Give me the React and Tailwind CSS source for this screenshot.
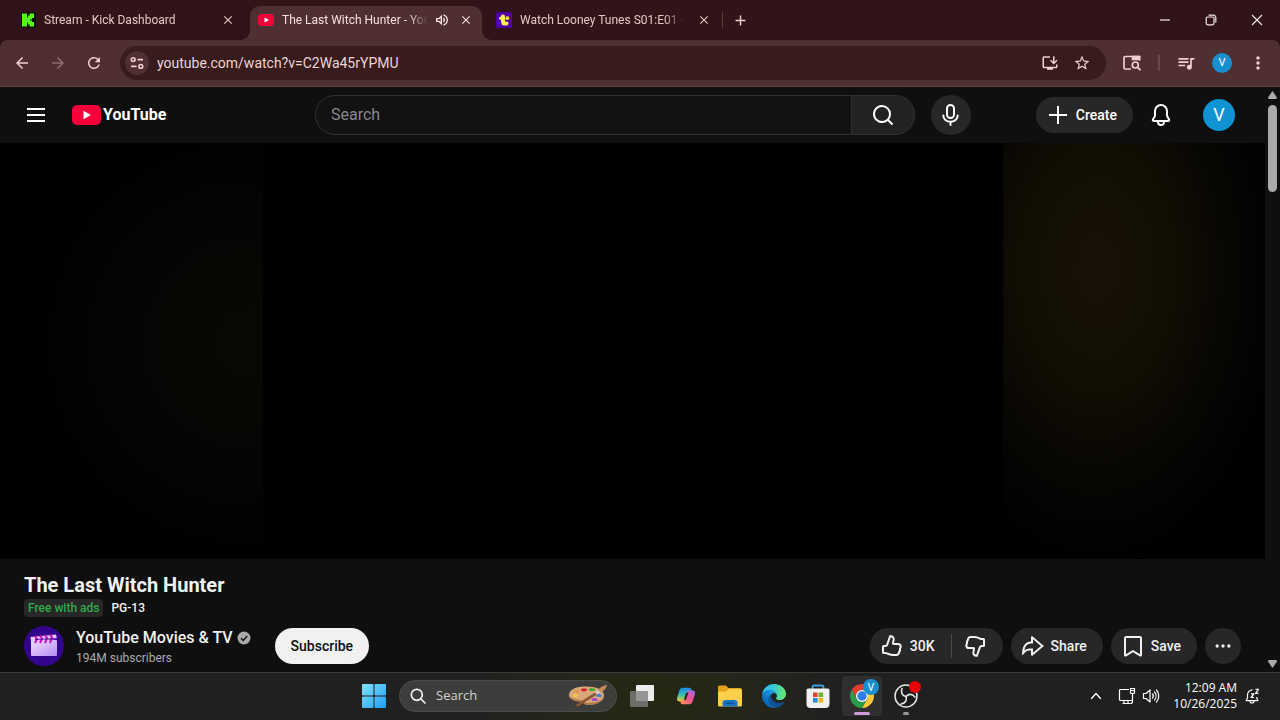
import React from "react";
import clsx from "clsx";
import {
    MdAdd,
    MdArrowBack,
    MdArrowForward,
    MdClose,
    MdInstallDesktop,
    MdMoreVert,
    MdOutlineVolumeUp,
    MdQueueMusic,
    MdRefresh,
    MdStarBorder,
} from "react-icons/md";

/* ---------- YouTube icons ---------- */

const ytPaths = {
    like: "M9.221 1.795a1 1 0 011.109-.656l1.04.173a4 4 0 013.252 4.784L14 9h4.061a3.664 3.664 0 013.576 2.868A3.68 3.68 0 0121 14.85l.02.087A3.815 3.815 0 0120 18.5v.043l-.01.227a2.82 2.82 0 01-.135.663l-.106.282A3.754 3.754 0 0116.295 22h-3.606l-.392-.007a12.002 12.002 0 01-5.223-1.388l-.343-.189-.27-.154a2.005 2.005 0 00-.863-.26l-.13-.004H3.5a1.5 1.5 0 01-1.5-1.5V12.5A1.5 1.5 0 013.5 11h1.79l.157-.013a1 1 0 00.724-.512l.063-.145 2.987-8.535Zm-1.1 9.196A3 3 0 015.29 13H4v4.998h1.468a4 4 0 011.986.528l.27.155.285.157A10 10 0 0012.69 20h3.606c.754 0 1.424-.483 1.663-1.2l.03-.126a.819.819 0 00.012-.131v-.872l.587-.586c.388-.388.577-.927.523-1.465l-.038-.23-.02-.087-.21-.9.55-.744A1.663 1.663 0 0018.061 11H14a2.002 2.002 0 01-1.956-2.418l.623-2.904a2 2 0 00-1.626-2.392l-.21-.035-2.71 7.741Z",
    share: "M10 3.158V7.51c-5.428.223-8.27 3.75-8.875 11.199-.04.487-.07.975-.09 1.464l-.014.395c-.014.473.578.684.88.32.302-.368.61-.73.925-1.086l.244-.273c1.79-1.967 3-2.677 4.93-2.917a18.011 18.011 0 012-.112v4.346a1 1 0 001.646.763l9.805-8.297 1.55-1.31-1.55-1.31-9.805-8.297A1 1 0 0010 3.158Zm2 6.27v.002-4.116l7.904 6.688L12 18.689v-4.212l-2.023.024c-1.935.022-3.587.17-5.197 1.024a9 9 0 00-1.348.893c.355-1.947.916-3.39 1.63-4.425 1.062-1.541 2.607-2.385 5.02-2.485L12 9.428Z",
    save: "M19 2H5a2 2 0 00-2 2v16.887c0 1.266 1.382 2.048 2.469 1.399L12 18.366l6.531 3.919c1.087.652 2.469-.131 2.469-1.397V4a2 2 0 00-2-2ZM5 20.233V4h14v16.233l-6.485-3.89-.515-.309-.515.309L5 20.233Z",
    bell: "M16 19a4 4 0 11-8 0H4.765C3.21 19 2.25 17.304 3.05 15.97l1.806-3.01A1 1 0 005 12.446V8a7 7 0 0114 0v4.446c0 .181.05.36.142.515l1.807 3.01c.8 1.333-.161 3.029-1.716 3.029H16ZM12 3a5 5 0 00-5 5v4.446a3 3 0 01-.428 1.543L4.765 17h14.468l-1.805-3.01A3 3 0 0117 12.445V8a5 5 0 00-5-5Zm-2 16a2 2 0 104 0h-4Z",
    search: "M11 2a9 9 0 105.641 16.01.966.966 0 00.152.197l3.5 3.5a1 1 0 101.414-1.414l-3.5-3.5a1 1 0 00-.197-.153A8.96 8.96 0 0020 11a9 9 0 00-9-9Zm0 2a7 7 0 110 14 7 7 0 010-14Z",
    menu: "M3 5h18v2H3zM3 11h18v2H3zM3 17h18v2H3z",
    plus: "M11 3h2v8h8v2h-8v8h-2v-8H3v-2h8z",
    more: "M5 10a2 2 0 100 4 2 2 0 000-4ZM12 10a2 2 0 100 4 2 2 0 000-4ZM19 10a2 2 0 100 4 2 2 0 000-4Z",
};

function YtIcon({ name, className }) {
    return (
        <svg viewBox="0 0 24 24" className={clsx("size-6 shrink-0 fill-current", className)} aria-hidden="true">
            <path d={ytPaths[name]} />
        </svg>
    );
}

function MicIcon() {
    return (
        <svg viewBox="0 0 24 24" className="size-6" fill="none" stroke="currentColor" strokeWidth="2" strokeLinecap="round">
            <rect x="8" y="2" width="7" height="13" rx="3.5" />
            <path d="M4.3 12.5a7.2 6.3 0 0 0 14.4 0M11.5 19v3" />
        </svg>
    );
}

/* ---------- Browser icons ---------- */

function KickFavicon() {
    return (
        <svg viewBox="0 0 16 16" className="size-4 shrink-0">
            <rect x="1" y="0.5" width="15" height="15" fill="#0b0f0a" />
            <g fill="#53fc18">
                <rect x="2" y="1.500" width="5" height="13" />
                <rect x="6" y="5.500" width="4" height="5" />
                <rect x="8" y="3.500" width="4" height="4" />
                <rect x="8" y="8.500" width="4" height="4" />
                <rect x="9.500" y="1.500" width="4.500" height="4.500" />
                <rect x="9.500" y="10" width="4.500" height="4.500" />
            </g>
        </svg>
    );
}

function YoutubeFavicon() {
    return (
        <svg viewBox="0 0 16 16" className="size-4 shrink-0">
            <rect x="0" y="2" width="16" height="12" rx="3.5" fill="#f5003a" />
            <path d="M6.5 5.4v5.2L11 8z" fill="#fff" />
        </svg>
    );
}

function TubiFavicon() {
    return (
        <svg viewBox="0 0 16 16" className="size-4 shrink-0">
            <rect width="16" height="16" rx="1.500" fill="#5200a8" />
            <g fill="#fff04a">
                <rect x="5" y="2.500" width="4" height="9" rx="1.800" />
                <rect x="3" y="4.500" width="6" height="3.600" rx="1.800" />
                <circle cx="11.300" cy="6.200" r="1.900" />
                <rect x="5.500" y="9.500" width="7" height="4" rx="2" />
            </g>
        </svg>
    );
}

function SiteInfoIcon() {
    return (
        <svg viewBox="0 0 16 16" className="size-4" fill="none" stroke="currentColor" strokeWidth="1.6">
            <circle cx="4.2" cy="4.6" r="1.9" />
            <path d="M8.5 4.6H14M2 11.4h5.5" />
            <circle cx="11.8" cy="11.4" r="1.9" />
        </svg>
    );
}

function SidePanelSearchIcon() {
    return (
        <svg viewBox="0 0 20 20" className="size-5" fill="none" stroke="currentColor" strokeWidth="1.7">
            <path d="M9 16H3.2A1.2 1.2 0 0 1 2 14.8V4.7a1.2 1.2 0 0 1 1.2-1.2H17.5v4" />
            <path d="M10.500 3.500H17.500v2.800H10.500z" fill="currentColor" />
            <circle cx="13.300" cy="12" r="3" />
            <path d="M15.500 14.200l3 3" />
        </svg>
    );
}

/* ---------- Taskbar icons ---------- */

function WindowsLogo() {
    return (
        <svg viewBox="0 0 24 24" className="size-6">
            <defs>
                <linearGradient id="win" x1="0" y1="0" x2="24" y2="24" gradientUnits="userSpaceOnUse">
                    <stop stopColor="#7fe3fb" />
                    <stop offset="1" stopColor="#1f9cf0" />
                </linearGradient>
            </defs>
            <g fill="url(#win)">
                <rect width="11.500" height="11.500" rx="1" />
                <rect x="12.500" width="11.500" height="11.500" rx="1" />
                <rect y="12.500" width="11.500" height="11.500" rx="1" />
                <rect x="12.500" y="12.500" width="11.500" height="11.500" rx="1" />
            </g>
        </svg>
    );
}

function PaletteArt() {
    return (
        <svg viewBox="0 0 40 22" className="h-[22px] w-10 shrink-0">
            <path d="M1 10C1 4 9 1.500 18 1.500c10 0 18 3 18 9C36 17 27 20 20 20c-4 0-4-3-7-3.500C8 16 1 15 1 10Z" fill="#d9a878" />
            <path d="M1 10c0 5 7 6.500 12 7 3 .500 3 3 7 3 7 0 16-3 16-9.500 0 4.500-8 7.500-16 7.500-4 0-4-2.500-7-3C8 14.500 1 13 1 10Z" fill="#b07a4c" />
            <ellipse cx="16" cy="4.800" rx="3" ry="1.600" fill="#d8232a" />
            <ellipse cx="24" cy="4.500" rx="3" ry="1.600" fill="#43a832" />
            <ellipse cx="8.500" cy="6.500" rx="2.600" ry="1.500" fill="#f2913d" />
            <ellipse cx="7.500" cy="10.500" rx="2.600" ry="1.500" fill="#f6c945" />
            <ellipse cx="31" cy="10.500" rx="2.800" ry="1.500" fill="#2f7fd8" />
            <ellipse cx="26.500" cy="14.500" rx="3" ry="1.600" fill="#a83fd0" />
            <path d="M7 20.500 27 7.500l2 2L10 21.500z" fill="#8a5534" />
            <path d="m27 7.500 3-2.500 2.500 2-3.500 2.500z" fill="#c9ced6" />
            <path d="M30 5c2-3 6-4.500 9-5-.500 3-3 6-6.500 7z" fill="#c98a55" />
        </svg>
    );
}

function TaskViewIcon() {
    return (
        <svg viewBox="0 0 26 24" className="h-6 w-[26px]">
            <rect x="7" y="1" width="18" height="16" rx="1" fill="#ececec" />
            <rect x="1" y="7" width="18" height="16" rx="1" fill="#808080" fillOpacity=".8" />
        </svg>
    );
}

function CopilotIcon() {
    return (
        <svg viewBox="0 0 24 24" className="size-[22px]">
            <defs>
                <linearGradient id="cpA" x1="0" y1="0" x2="0" y2="1">
                    <stop stopColor="#1f86e8" />
                    <stop offset=".5" stopColor="#2fc0b4" />
                    <stop offset="1" stopColor="#f6c92c" />
                </linearGradient>
                <linearGradient id="cpB" x1="1" y1="0" x2="0" y2="1">
                    <stop stopColor="#9b6cf0" />
                    <stop offset=".5" stopColor="#f0538f" />
                    <stop offset="1" stopColor="#ff9a4a" />
                </linearGradient>
            </defs>
            <path
                d="M8.500 3h7c1.500 0 2.200 1 2.600 2.500L18.700 7h-2c-1.500 0-2.300.8-2.700 2.200l-1.600 5.600c-.6 2-1.400 3.200-3.200 3.200H4.600C2.500 18 1.700 16 2.300 14l2.500-8C5.400 4 6.600 3 8.500 3Z"
                fill="url(#cpA)"
            />
            <path
                d="M15.500 21h-7c-1.500 0-2.200-1-2.600-2.500L5.400 17h2.400c1.500 0 2.300-.8 2.700-2.200l1.600-5.600C12.700 7.200 13.500 6 15.300 6h4.100c2.100 0 2.900 2 2.300 4l-2.500 8c-.6 2-1.800 3-3.700 3Z"
                fill="url(#cpB)"
            />
            <path d="m14.600 8.500-2.600 7.500h-2.400l2.600-7.500z" fill="#25271a" />
        </svg>
    );
}

function ExplorerIcon() {
    return (
        <svg viewBox="0 0 26 24" className="h-6 w-[26px]">
            <path d="M1 3a1.500 1.500 0 0 1 1.500-1.500H9L11.500 4H23a2 2 0 0 1 2 2v4H1z" fill="#e3a21a" />
            <path d="M1 7.500 9 7.500 11.500 5H23a2 2 0 0 1 2 2v14a1.500 1.500 0 0 1-1.500 1.500h-21A1.500 1.500 0 0 1 1 21z" fill="#fcd04b" />
            <path d="M5.500 22.500V19a3 3 0 0 1 3-3h9a3 3 0 0 1 3 3v3.500z" fill="#1c75c4" />
            <rect x="8.500" y="18.500" width="9" height="1.500" rx=".7" fill="#0d4f92" />
        </svg>
    );
}

function EdgeIcon() {
    return (
        <svg viewBox="0 0 256 256" className="size-6">
            <defs>
                <linearGradient id="edA" x1="58" y1="177" x2="231" y2="177" gradientUnits="userSpaceOnUse">
                    <stop stopColor="#0c59a4" />
                    <stop offset="1" stopColor="#114a8b" />
                </linearGradient>
                <linearGradient id="edB" x1="152" y1="90" x2="40" y2="220" gradientUnits="userSpaceOnUse">
                    <stop stopColor="#1b9de2" />
                    <stop offset=".5" stopColor="#1480d0" />
                    <stop offset="1" stopColor="#0a63b0" />
                </linearGradient>
                <linearGradient id="edC" x1="10" y1="70" x2="250" y2="110" gradientUnits="userSpaceOnUse">
                    <stop stopColor="#35c1f1" />
                    <stop offset=".4" stopColor="#34c6d8" />
                    <stop offset="1" stopColor="#66eb6e" />
                </linearGradient>
            </defs>
            <path
                d="M231 190.5c-3.4 1.8-6.9 3.4-10.5 4.7a101.5 101.5 0 0 1-35.9 6.4c-47.3 0-88.5-32.5-88.5-74.3 0-11.4 6.4-21.9 16.4-27.3-42.8 1.8-53.8 46.4-53.8 72.5 0 74 68.1 81.4 82.8 81.4 7.9 0 19.8-2.3 27-4.6l1.3-.4a128.3 128.3 0 0 0 66.6-52.8 4 4 0 0 0-5.4-5.6z"
                fill="url(#edA)"
            />
            <path
                d="M105.7 241.4a79.2 79.2 0 0 1-22.7-21.3 80.7 80.7 0 0 1 29.5-120c3.2-1.5 8.5-4.2 15.6-4a32.4 32.4 0 0 1 25.7 13 31.9 31.9 0 0 1 6.3 18.7c0-.2 24.5-79.6-80-79.6-43.9 0-80 41.6-80 78.2a130.2 130.2 0 0 0 12.1 56 128 128 0 0 0 156.4 67 75.5 75.5 0 0 1-62.8-8z"
                fill="url(#edB)"
            />
            <path
                d="M152.3 148.9c-.9 1-3.4 2.5-3.4 5.6 0 2.6 1.7 5.2 4.8 7.3 14.3 10 41.4 8.6 41.5 8.6a59.6 59.6 0 0 0 30.3-8.3 61.4 61.4 0 0 0 30.4-52.9c.3-22.4-8-37.3-11.3-43.9C223.5 23.9 177.7 0 128 0A128 128 0 0 0 0 126.2c.5-36.5 36.8-66 80-66 3.5 0 23.5.3 42 10a72.6 72.6 0 0 1 30.9 29.3c6.1 10.6 7.2 24.1 7.2 29.5s-2.7 13.3-7.8 19.9z"
                fill="url(#edC)"
            />
        </svg>
    );
}

function StoreIcon() {
    return (
        <svg viewBox="0 0 26 26" className="size-[26px]">
            <path d="M7.500 7V4A1.500 1.500 0 0 1 9 2.500h8A1.500 1.500 0 0 1 18.500 4V7" fill="none" stroke="#3b9fe0" strokeWidth="1.800" />
            <path d="M1.500 7A1.500 1.500 0 0 1 3 5.500h20A1.500 1.500 0 0 1 24.500 7V21a4 4 0 0 1-4 4h-15a4 4 0 0 1-4-4z" fill="#f1f1f1" />
            <rect x="8" y="9.500" width="4.600" height="4.600" fill="#e8452c" />
            <rect x="13.500" y="9.500" width="4.600" height="4.600" fill="#6fb52c" />
            <rect x="8" y="15" width="4.600" height="4.600" fill="#1f8fe0" />
            <rect x="13.500" y="15" width="4.600" height="4.600" fill="#f6b31a" />
        </svg>
    );
}

function ChromeIcon() {
    return (
        <svg viewBox="0 0 24 24" className="size-6">
            <path d="M12 6H22.390A12 12 0 0 0 1.610 6L6.800 15A6 6 0 0 1 12 6Z" fill="#e33b2e" />
            <path d="M12 6H22.390A12 12 0 0 1 12 24L17.200 15A6 6 0 0 0 12 6Z" fill="#fcc934" />
            <path d="M1.610 6A12 12 0 0 0 12 24L17.200 15A6 6 0 0 1 6.800 15Z" fill="#2a9d4a" />
            <circle cx="12" cy="12" r="6" fill="#fff" />
            <circle cx="12" cy="12" r="4.700" fill="#2f7de9" />
        </svg>
    );
}

function ObsIcon() {
    const blade = "M12 12.500C8.500 11.800 6.300 8.800 8 4.500";
    return (
        <svg viewBox="0 0 24 24" className="size-6" fill="none" stroke="#e6e6e6" strokeLinecap="round">
            <circle cx="12" cy="12" r="11" fill="#1b1b1d" strokeWidth="1.500" />
            <g strokeWidth="1.600">
                <path d={blade} />
                <path d={blade} transform="rotate(120 12 12.5)" />
                <path d={blade} transform="rotate(240 12 12.5)" />
            </g>
        </svg>
    );
}

function NetworkIcon() {
    return (
        <svg viewBox="0 0 18 18" className="size-[18px]" fill="none" stroke="currentColor" strokeWidth="1.200">
            <path d="M11 2.500H2.500a1 1 0 0 0-1 1v9a1 1 0 0 0 1 1h11.500M6 13.500v3M10 13.500v3M4.500 16.500h8" />
            <path d="M12.500 1.500h4v4a1 1 0 0 1-1 1h-2a1 1 0 0 1-1-1zM14.500 6.500v8a2 2 0 0 1-2 2" />
            <path d="M13 3.500h3" />
        </svg>
    );
}

function SoundIcon() {
    return (
        <svg viewBox="0 0 18 18" className="size-[18px]" fill="none" stroke="currentColor" strokeWidth="1.200" strokeLinejoin="round">
            <path d="M1.500 6.500h2.500L8 3v12l-4-3.500H1.500z" />
            <path d="M10.500 7a3 3 0 0 1 0 4M12.500 5a6 6 0 0 1 0 8M14.500 3a9 9 0 0 1 0 12" strokeLinecap="round" />
        </svg>
    );
}

function SnoozeBellIcon() {
    return (
        <svg viewBox="0 0 16 16" className="size-4" fill="none" stroke="currentColor" strokeWidth="1.200" strokeLinejoin="round">
            <path d="M8.500 1.800A5 5 0 0 0 3.500 7v3l-1.500 2.700h12L12.800 10V9" />
            <path d="M6 13a2 2 0 0 0 4 0" />
            <path d="M11.500 1.300h3L11.500 5.300h3M7 5.800h3L7 9.500h3" />
        </svg>
    );
}

/* ---------- Browser chrome ---------- */

const tabs = [
    { title: "Stream - Kick Dashboard", icon: KickFavicon },
    { title: "The Last Witch Hunter - You", icon: YoutubeFavicon, active: true, audio: true },
    { title: "Watch Looney Tunes S01:E01 -", icon: TubiFavicon },
];

function Tab({ title, icon: Icon, active, audio }) {
    return (
        <div
            className={clsx(
                "relative flex h-[34px] w-[232px] items-center rounded-t-[10px] px-2 pb-[6px]",
                active ? "bg-[#4f2f31] text-[#f6dfde]" : "text-[#e3c6c5]"
            )}
        >
            {active && (
                <>
                    <span className="absolute bottom-0 -left-[10px] size-[10px] bg-[radial-gradient(circle_at_0_0,#0000_10px,#4f2f31_10px)]" />
                    <span className="absolute bottom-0 -right-[10px] size-[10px] bg-[radial-gradient(circle_at_100%_0,#0000_10px,#4f2f31_10px)]" />
                </>
            )}
            <Icon />
            <span className="ml-2 min-w-0 flex-1 font-[Roboto,sans-serif] text-xs leading-5 whitespace-nowrap [mask-image:linear-gradient(to_right,#000_calc(100%-20px),transparent)]">
                {title}
            </span>
            {audio && <MdOutlineVolumeUp className="ml-[6px] size-4 shrink-0" />}
            <button aria-label="Close tab" className={clsx("flex size-4 shrink-0 items-center justify-center", audio ? "ml-2" : "ml-3")}>
                <MdClose className="size-[14px]" />
            </button>
        </div>
    );
}

function TabStrip() {
    return (
        <div className="flex h-10 items-end bg-[#301417]">
            <div className="flex gap-[6px] pl-3">
                {tabs.map((tab) => (
                    <Tab key={tab.title} {...tab} />
                ))}
            </div>
            <div className="flex h-10 items-center pl-[2px] text-[#f0d2d1]">
                <span className="h-4 w-px bg-[#5e3a3c]" />
                <button aria-label="New tab" className="ml-[7px] flex size-5 items-center justify-center">
                    <MdAdd className="size-[17px]" />
                </button>
            </div>
            <div className="ml-auto flex h-10 text-[#f5e6e6]">
                <button aria-label="Minimize" className="flex w-[46px] items-center justify-center">
                    <svg viewBox="0 0 12 12" className="size-3" stroke="currentColor">
                        <path d="M1 6h10" strokeWidth="1.200" />
                    </svg>
                </button>
                <button aria-label="Restore" className="flex w-[46px] items-center justify-center">
                    <svg viewBox="0 0 12 12" className="size-3" fill="none" stroke="currentColor" strokeWidth="1.200">
                        <rect x="1.200" y="3" width="7.800" height="7.800" rx="1.500" />
                        <path d="M3.500 1.200H8.500a2.300 2.300 0 0 1 2.300 2.300V8.500" />
                    </svg>
                </button>
                <button aria-label="Close" className="flex w-[46px] items-center justify-center">
                    <svg viewBox="0 0 12 12" className="size-3" stroke="currentColor" strokeWidth="1.200">
                        <path d="m1 1 10 10M11 1 1 11" />
                    </svg>
                </button>
            </div>
        </div>
    );
}

function ToolButton({ label, className, children }) {
    return (
        <button aria-label={label} className={clsx("flex size-7 shrink-0 items-center justify-center", className)}>
            {children}
        </button>
    );
}

function Toolbar() {
    return (
        <div className="bg-[#301417]">
            <div className="flex h-[47px] items-center rounded-t-lg border-b border-[#5b4344] bg-[#4f2f31] px-2 text-[#f0cfce]">
                <div className="flex gap-2">
                    <ToolButton label="Back">
                        <MdArrowBack className="size-[18px]" />
                    </ToolButton>
                    <ToolButton label="Forward" className="text-[#906c6d]">
                        <MdArrowForward className="size-[18px]" />
                    </ToolButton>
                    <ToolButton label="Reload">
                        <MdRefresh className="size-[18px]" />
                    </ToolButton>
                </div>
                <div className="mx-3 flex h-[34px] flex-1 items-center rounded-full bg-[#371b1d] pr-[10px] pl-[5px]">
                    <button aria-label="Site information" className="flex size-6 items-center justify-center rounded-full bg-[#4f2f31]">
                        <SiteInfoIcon />
                    </button>
                    <input
                        aria-label="Address bar"
                        className="ml-2 min-w-0 flex-1 bg-transparent font-[Roboto,sans-serif] text-sm text-[#ecd4d4] outline-none"
                        defaultValue="youtube.com/watch?v=C2Wa45rYPMU"
                    />
                    <ToolButton label="Install">
                        <MdInstallDesktop className="size-[18px]" />
                    </ToolButton>
                    <ToolButton label="Bookmark" className="ml-1">
                        <MdStarBorder className="size-[18px]" />
                    </ToolButton>
                </div>
                <ToolButton label="Side panel search">
                    <SidePanelSearchIcon />
                </ToolButton>
                <span className="mx-3 h-4 w-[2px] bg-[#6b484a]" />
                <div className="flex gap-2">
                    <ToolButton label="Media controls">
                        <MdQueueMusic className="size-5" />
                    </ToolButton>
                    <ToolButton label="Profile">
                        <span className="flex size-5 items-center justify-center rounded-full bg-[#1a8fcf] font-[Roboto,sans-serif] text-[11px] text-white">V</span>
                    </ToolButton>
                    <ToolButton label="Menu">
                        <MdMoreVert className="size-5" />
                    </ToolButton>
                </div>
            </div>
        </div>
    );
}

/* ---------- YouTube page ---------- */

function Masthead() {
    return (
        <header className="flex h-14 shrink-0 items-center pr-[30px] pl-6 text-white">
            <div className="flex w-[291px] shrink-0 items-center gap-6">
                <button aria-label="Guide">
                    <YtIcon name="menu" />
                </button>
                <a href="#home" className="flex items-center gap-[2px]">
                    <svg viewBox="0 0 29 20" className="h-5 w-[29px]">
                        <rect width="29" height="20" rx="5" fill="#f5003a" />
                        <path d="M11.500 5.800v8.400L18.800 10z" fill="#fff" />
                    </svg>
                    <span className="text-base leading-5 font-bold">YouTube</span>
                </a>
            </div>
            <div className="flex min-w-0 flex-1 items-center gap-4">
                <form className="flex h-10 min-w-0 flex-1" onSubmit={(e) => e.preventDefault()}>
                    <input
                        aria-label="Search YouTube"
                        placeholder="Search"
                        className="min-w-0 flex-1 rounded-l-full border border-[#303030] bg-[#121212] pl-[15px] text-base outline-none placeholder:text-[#888]"
                    />
                    <button aria-label="Search" className="flex w-[63px] items-center justify-center rounded-r-full border border-l-0 border-[#303030] bg-[#222]">
                        <YtIcon name="search" />
                    </button>
                </form>
                <button aria-label="Search with your voice" className="flex size-10 items-center justify-center rounded-full bg-[#272727]">
                    <MicIcon />
                </button>
            </div>
            <div className="flex w-[264px] shrink-0 items-center justify-end">
                <button className="flex h-9 items-center gap-[6px] rounded-full bg-[#272727] pr-4 pl-[10px] text-sm font-medium">
                    <YtIcon name="plus" />
                    Create
                </button>
                <button aria-label="Notifications" className="ml-4">
                    <YtIcon name="bell" />
                </button>
                <button aria-label="Account" className="ml-[30px] flex size-8 items-center justify-center rounded-full bg-[#0f93d2] text-lg">
                    V
                </button>
            </div>
        </header>
    );
}

function Player() {
    return (
        <div className="flex min-h-[120px] flex-1 bg-black">
            <div className="w-[263px] bg-[radial-gradient(ellipse_220px_220px_at_95%_48%,#080804,#040403_65%,#000)]" />
            <div className="flex-1" />
            <div className="w-[262px] bg-[radial-gradient(ellipse_190px_300px_at_36%_30%,#191206,#120f02_35%,#090704_65%,#000)]" />
        </div>
    );
}

function ActionButton({ icon, children }) {
    return (
        <button className="flex h-9 items-center gap-[6px] rounded-full bg-[#272727] pr-4 pl-[10px]">
            <YtIcon name={icon} />
            {children}
        </button>
    );
}

function ChannelAvatar() {
    return (
        <svg viewBox="0 0 40 40" className="size-10 shrink-0">
            <defs>
                <linearGradient id="clap" x1="0" y1="0" x2="1" y2="1">
                    <stop stopColor="#f3ddff" />
                    <stop offset="1" stopColor="#b48cf5" />
                </linearGradient>
            </defs>
            <circle cx="20" cy="20" r="20" fill="#33058c" />
            <rect x="7" y="14" width="26" height="16" rx="1" fill="url(#clap)" />
            <path d="M6.500 11 32 8.500l1 4.500L7 15z" fill="#e9c9ff" />
            <g stroke="#c217c4" strokeWidth="2.200" fill="none">
                <path d="m11 10 2 3-2 4M16 9.500l2 3-2 4.500M21 9l2 3-2 5M26 8.500l2 3-2 5.500" />
            </g>
            <path d="m11 13.500 22-1" stroke="#33058c" strokeWidth=".8" />
        </svg>
    );
}

function VideoDetails() {
    return (
        <section className="shrink-0 px-6 pt-3 pb-[6px] text-[#f1f1f1]">
            <h1 className="text-xl leading-7 font-bold">The Last Witch Hunter</h1>
            <div className="flex h-[18px] items-center gap-2 text-xs leading-[18px] font-medium">
                <span className="rounded-sm bg-[#272727] px-1 text-[#32a94c]">Free with ads</span>
                <span>PG-13</span>
            </div>
            <div className="mt-[9px] flex h-10 items-center">
                <ChannelAvatar />
                <div className="ml-3">
                    <a href="#channel" className="flex items-center gap-1 text-base leading-6 font-medium">
                        YouTube Movies &amp; TV
                        <svg viewBox="0 0 14 14" className="size-[14px]">
                            <circle cx="7" cy="7" r="6.500" fill="#aaa" />
                            <path d="m4 7.200 2.200 2.200L10.200 5" fill="none" stroke="#0f0f0f" strokeWidth="1.400" />
                        </svg>
                    </a>
                    <p className="text-xs leading-4 text-[#aaa]">194M subscribers</p>
                </div>
                <button className="ml-6 h-9 rounded-full bg-[#f1f1f1] px-4 text-sm font-medium text-[#0f0f0f]">Subscribe</button>
                <div className="ml-auto flex gap-2 text-sm font-medium">
                    <div className="flex h-9 items-center rounded-full bg-[#272727]">
                        <button className="flex items-center gap-[6px] pr-4 pl-[10px]">
                            <YtIcon name="like" />
                            30K
                        </button>
                        <span className="h-6 w-px bg-[#4a4a4a]" />
                        <button aria-label="Dislike" className="pr-4 pl-[11px]">
                            <YtIcon name="like" className="rotate-180" />
                        </button>
                    </div>
                    <ActionButton icon="share">Share</ActionButton>
                    <ActionButton icon="save">Save</ActionButton>
                    <button aria-label="More actions" className="flex size-9 items-center justify-center rounded-full bg-[#272727]">
                        <YtIcon name="more" className="p-[2px]" />
                    </button>
                </div>
            </div>
        </section>
    );
}

function Scrollbar() {
    return (
        <div className="flex w-[15px] shrink-0 flex-col items-center bg-[#0f0f0f] py-1">
            <svg viewBox="0 0 9 8" className="h-2 w-[9px] fill-[#aaa]">
                <path d="M4.500 0 9 6.500Q9 8 8 8H1Q0 8 0 6.500z" />
            </svg>
            <div className="mt-[6px] h-[87px] w-[9px] rounded-full bg-[#aaa]" />
            <svg viewBox="0 0 9 8" className="mt-auto h-2 w-[9px] rotate-180 fill-[#aaa]">
                <path d="M4.500 0 9 6.500Q9 8 8 8H1Q0 8 0 6.500z" />
            </svg>
        </div>
    );
}

/* ---------- Taskbar ---------- */

function TaskButton({ label, className, children }) {
    return (
        <button aria-label={label} className={clsx("relative flex h-10 w-11 items-center justify-center", className)}>
            {children}
        </button>
    );
}

function Taskbar() {
    return (
        <footer className="grid h-12 shrink-0 grid-cols-[1fr_auto_1fr] items-center bg-[#202020] bg-[radial-gradient(ellipse_190px_90px_at_51%_50%,#262812,#24261a_50%,#202020)] text-white shadow-[inset_0_1px_0_#3c3c3c]">
            <div />
            <div className="flex items-center">
                <TaskButton label="Start">
                    <WindowsLogo />
                </TaskButton>
                <label className="mx-[3px] flex h-8 w-[218px] items-center rounded-full border border-[#4c4c4a] bg-[#3d3d3b] pr-2 pl-[10px]">
                    <svg viewBox="0 0 16 16" className="size-4 shrink-0" fill="none" stroke="#eee" strokeWidth="1.700" strokeLinecap="round">
                        <circle cx="6.800" cy="6.800" r="5.500" />
                        <path d="m11 11 4 4" />
                    </svg>
                    <input
                        aria-label="Search Windows"
                        placeholder="Search"
                        className="ml-[10px] min-w-0 flex-1 bg-transparent text-[13px] outline-none placeholder:text-[#d2d2d2]"
                    />
                    <PaletteArt />
                </label>
                <TaskButton label="Task view">
                    <TaskViewIcon />
                </TaskButton>
                <TaskButton label="Copilot">
                    <CopilotIcon />
                </TaskButton>
                <TaskButton label="File Explorer">
                    <ExplorerIcon />
                </TaskButton>
                <TaskButton label="Microsoft Edge">
                    <EdgeIcon />
                </TaskButton>
                <TaskButton label="Microsoft Store">
                    <StoreIcon />
                </TaskButton>
                <TaskButton label="Google Chrome">
                    <span className="flex h-10 w-10 items-center justify-center rounded bg-[#2f2f2f]">
                        <ChromeIcon />
                    </span>
                    <span className="absolute top-[3px] right-[5px] flex size-4 items-center justify-center rounded-full bg-[#1a8fcf] font-[Roboto,sans-serif] text-[10px]">
                        V
                    </span>
                    <span className="absolute bottom-px h-[3px] w-4 rounded-full bg-[#cf9bdf]" />
                </TaskButton>
                <TaskButton label="OBS Studio">
                    <ObsIcon />
                    <span className="absolute top-[5px] right-[7px] size-3 rounded-full bg-[#e60000]" />
                    <span className="absolute bottom-px h-[3px] w-[6px] rounded-full bg-[#9a9a9a]" />
                </TaskButton>
            </div>
            <div className="flex items-center justify-end pr-5">
                <button aria-label="Show hidden icons">
                    <svg viewBox="0 0 12 12" className="size-3" fill="none" stroke="currentColor" strokeWidth="1.300" strokeLinecap="round">
                        <path d="m1.500 8.500 4.500-5 4.500 5" />
                    </svg>
                </button>
                <button aria-label="Network and volume" className="ml-4 flex gap-[6px]">
                    <NetworkIcon />
                    <SoundIcon />
                </button>
                <div className="ml-[13px] text-right text-xs leading-4">
                    <p>12:09 AM</p>
                    <p>10/26/2025</p>
                </div>
                <button aria-label="Notifications" className="ml-[7px]">
                    <SnoozeBellIcon />
                </button>
            </div>
        </footer>
    );
}

export default function App() {
    return (
        <div className="flex h-screen flex-col overflow-hidden bg-[#0f0f0f] font-['Open_Sans',sans-serif]">
            <TabStrip />
            <Toolbar />
            <div className="flex min-h-0 flex-1">
                <main className="flex min-w-0 flex-1 flex-col font-[Roboto,sans-serif]">
                    <Masthead />
                    <Player />
                    <VideoDetails />
                </main>
                <Scrollbar />
            </div>
            <Taskbar />
        </div>
    );
}
